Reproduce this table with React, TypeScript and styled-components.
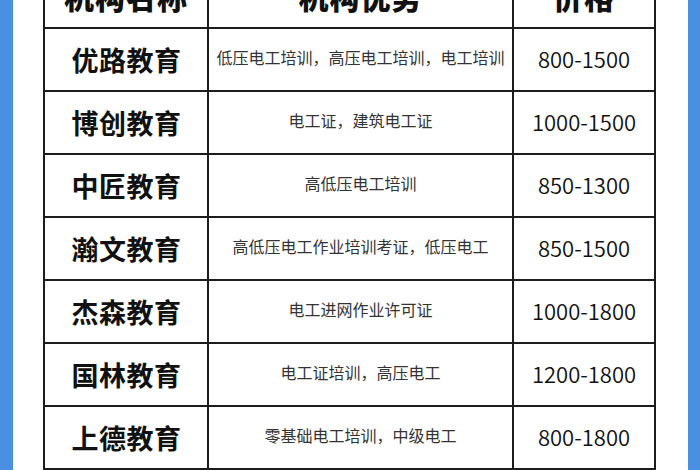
import React from "react";
import styled, { createGlobalStyle } from "styled-components";

const Global = createGlobalStyle`
  html, body {
    margin: 0;
    padding: 0;
    background: #4a90e2;
    font-family: "Noto Sans CJK SC", "Noto Sans", sans-serif;
  }
`;

const Page = styled.div`
  margin: 0 12px 0 13px;
  height: 470px;
  background: #ffffff;
  overflow: hidden;
  padding: 0 32px 0 30px;
`;

const Table = styled.div`
  margin-top: -38px;
  display: grid;
  grid-template-columns: 164px 305px 142px;
  border-left: 2px solid #1c1c1c;
  border-top: 2px solid #1c1c1c;
`;

const Cell = styled.div<{ $head?: boolean }>`
  box-sizing: border-box;
  height: ${(p) => (p.$head ? "65px" : "63px")};
  border-right: 2px solid #1c1c1c;
  border-bottom: 2px solid #1c1c1c;
  display: flex;
  align-items: center;
  justify-content: center;
  background: #fff;
`;

const HeadText = styled.span`
  font-size: 30px;
  font-weight: 900;
  color: #111;
  letter-spacing: 1px;
`;

const Name = styled.span`
  font-size: 27px;
  font-weight: 700;
  color: #111;
  letter-spacing: 0.5px;
  padding-left: 1px;
`;

const Desc = styled.span`
  font-size: 16px;
  color: #333;
  padding-bottom: 6px;
  white-space: nowrap;
`;

const Price = styled.span`
  font-size: 22px;
  font-weight: 350;
  color: #111;
  padding-bottom: 4px;
`;

const rows = [
  ["优路教育", "低压电工培训，高压电工培训，电工培训", "800-1500"],
  ["博创教育", "电工证，建筑电工证", "1000-1500"],
  ["中匠教育", "高低压电工培训", "850-1300"],
  ["瀚文教育", "高低压电工作业培训考证，低压电工", "850-1500"],
  ["杰森教育", "电工进网作业许可证", "1000-1800"],
  ["国林教育", "电工证培训，高压电工", "1200-1800"],
  ["上德教育", "零基础电工培训，中级电工", "800-1800"],
  ["", "", ""],
];

export default function App() {
  return (
    <>
      <Global />
      <Page>
        <Table>
          <Cell $head>
            <HeadText>机构名称</HeadText>
          </Cell>
          <Cell $head>
            <HeadText>机构优势</HeadText>
          </Cell>
          <Cell $head>
            <HeadText>价格</HeadText>
          </Cell>
          {rows.map(([n, d, p], i) => (
            <React.Fragment key={i}>
              <Cell>
                <Name>{n}</Name>
              </Cell>
              <Cell>
                <Desc>{d}</Desc>
              </Cell>
              <Cell>
                <Price>{p}</Price>
              </Cell>
            </React.Fragment>
          ))}
        </Table>
      </Page>
    </>
  );
}
